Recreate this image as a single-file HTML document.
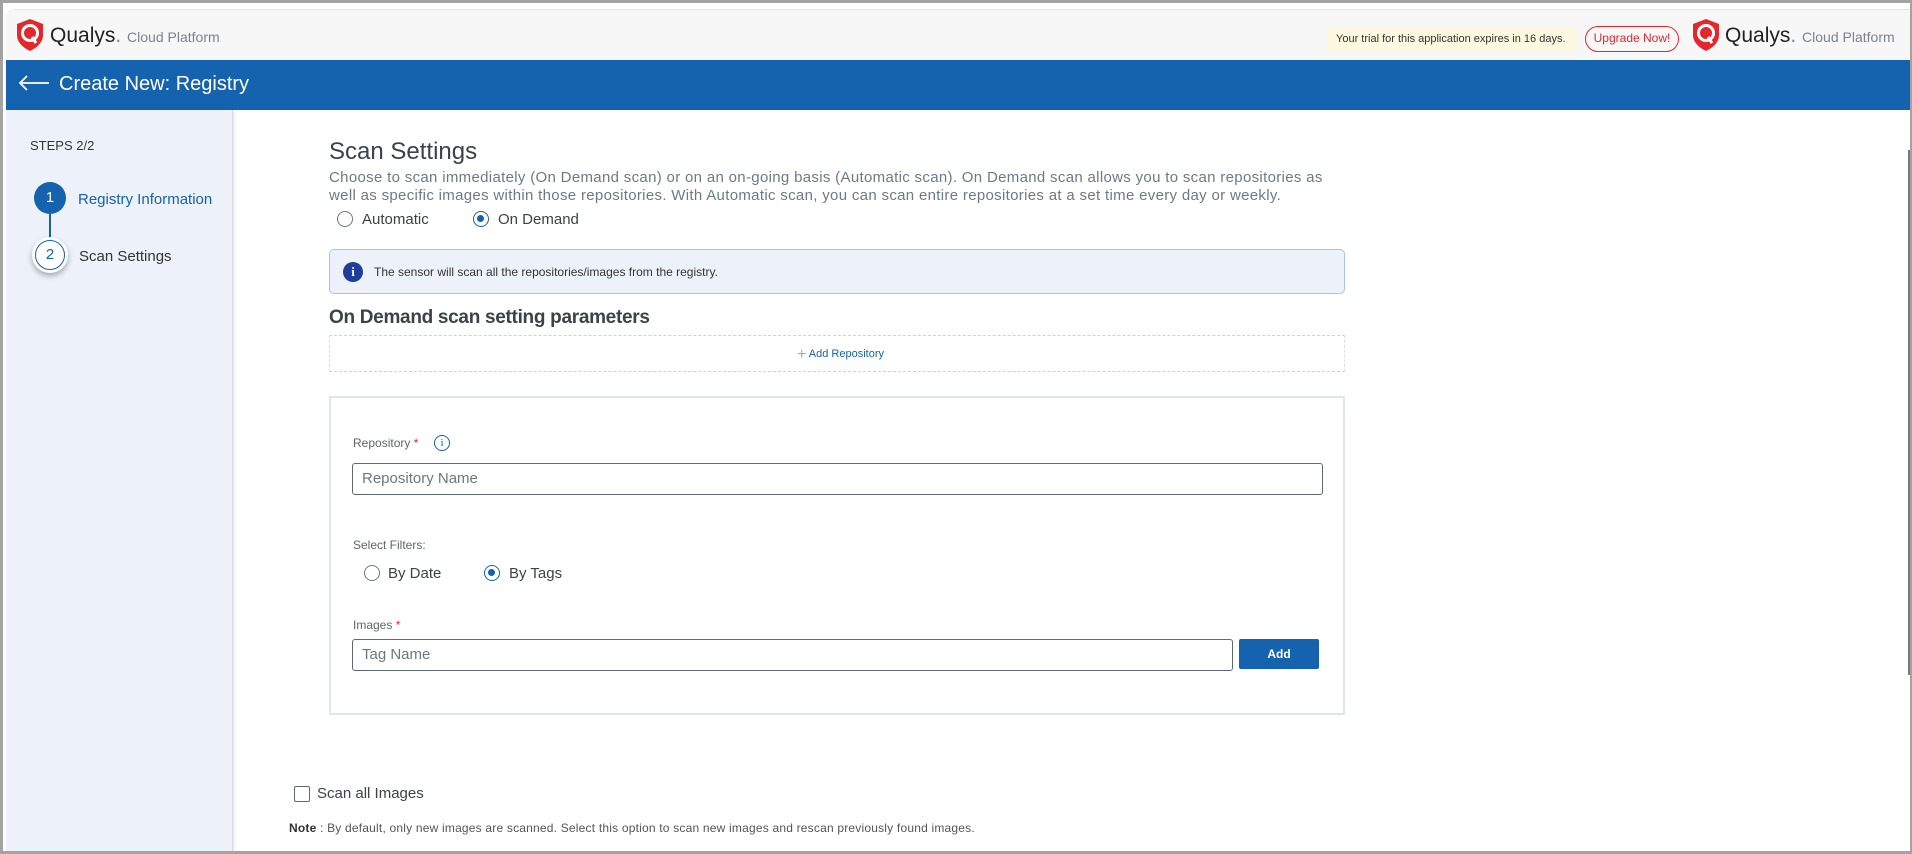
<!DOCTYPE html>
<html><head><meta charset="utf-8"><style>
*{box-sizing:border-box;margin:0;padding:0}
body{width:1912px;height:854px;overflow:hidden;background:#a3a3a3;font-family:"Liberation Sans",Arial,sans-serif;position:relative}
.frame{position:absolute;left:3px;top:3px;width:1907px;height:848px;background:#fff;overflow:hidden}
.top{position:absolute;left:3px;top:6px;right:0;height:51px;background:#f7f7f7;border-top-left-radius:10px;border-top:1px solid #e6e6e6}
.blue{position:absolute;left:3px;top:57px;width:1904px;height:50px;background:#1562ae}
.side{position:absolute;left:3px;top:107px;width:227px;height:745px;background:#edf2fa;border-right:1px solid #d5dbe3;box-shadow:2px 0 3px rgba(0,0,0,.08)}
.abs{position:absolute;white-space:nowrap}
.radio{position:absolute;width:16px;height:16px;border:1.5px solid #6b7680;border-radius:50%;background:#fff}
.radio.on::after{content:"";position:absolute;left:3px;top:3px;width:7px;height:7px;border-radius:50%;background:#1562ae}
.radio.on{border-color:#1562ae}
.lbl{font-size:12px;color:#5c6670}
.inp{position:absolute;border:1px solid #5a6a78;border-radius:3px;background:#fff;font-size:15px;color:#6c7780;padding-left:9px;line-height:30px}
</style></head><body>
<div class="frame">
<div class="top"></div>
<svg class="abs" style="left:12px;top:15px" width="30" height="34" viewBox="0 0 30 34"><path d="M15 1 L28 6 V17 C28 25 21 30 15 33 C9 30 2 25 2 17 V6 Z" fill="#e3272b"/><circle cx="15" cy="15" r="7.5" fill="none" stroke="#fff" stroke-width="3"/><path d="M17 19 L21 25" stroke="#fff" stroke-width="3"/></svg>
<div class="abs" style="left:47px;top:21px;font-size:21px;color:#222">Qualys<span style="color:#888">.</span> <span style="font-size:14px;color:#7a8290">Cloud Platform</span></div>
<div class="abs" style="left:1324px;top:25px;width:251px;height:23px;background:#fdf8e0;font-size:11px;color:#333;line-height:23px;padding-left:9px">Your trial for this application expires in 16 days.</div>
<div class="abs" style="left:1582px;top:23px;width:94px;height:26px;border:1.5px solid #e3272b;border-radius:13px;font-size:12px;color:#e3272b;line-height:23px;text-align:center">Upgrade Now!</div>
<svg class="abs" style="left:1688px;top:15px" width="30" height="34" viewBox="0 0 30 34"><path d="M15 1 L28 6 V17 C28 25 21 30 15 33 C9 30 2 25 2 17 V6 Z" fill="#e3272b"/><circle cx="15" cy="15" r="7.5" fill="none" stroke="#fff" stroke-width="3"/><path d="M17 19 L21 25" stroke="#fff" stroke-width="3"/></svg>
<div class="abs" style="left:1722px;top:21px;font-size:21px;color:#222">Qualys<span style="color:#888">.</span> <span style="font-size:14px;color:#7a8290">Cloud Platform</span></div>
<div class="blue"></div>
<svg class="abs" style="left:15px;top:72px" width="32" height="16" viewBox="0 0 32 16"><path d="M31 8 H2 M9 1 L2 8 L9 15" stroke="#fff" stroke-width="1.8" fill="none"/></svg>
<div class="abs" style="left:56px;top:70px;font-size:20px;color:#fff">Create New: Registry</div>
<div class="side"></div>
<div class="abs" style="left:27px;top:135px;font-size:13px;color:#333">STEPS 2/2</div>
<div class="abs" style="left:46px;top:211px;width:2px;height:30px;background:#1562ae"></div>
<div class="abs" style="left:31px;top:179px;width:32px;height:32px;border-radius:50%;background:#1562ae;color:#fff;font-size:15px;text-align:center;line-height:32px">1</div>
<div class="abs" style="left:75px;top:188px;font-size:15px;color:#1562ae">Registry Information</div>
<div class="abs" style="left:29px;top:234px;width:36px;height:36px;border-radius:50%;background:#fff;box-shadow:0 3px 6px rgba(0,0,0,.3)"><div style="margin:3px;width:30px;height:30px;border:1.5px solid #1562ae;border-radius:50%;color:#1562ae;font-size:15px;text-align:center;line-height:27px">2</div></div>
<div class="abs" style="left:76px;top:245px;font-size:15px;color:#333">Scan Settings</div>
<div class="abs" style="left:326px;top:135px;font-size:24px;color:#3a424a">Scan Settings</div>
<div class="abs" style="left:326px;top:166px;font-size:15px;letter-spacing:0.32px;color:#6b7a88;line-height:18px">Choose to scan immediately (On Demand scan) or on an on-going basis (Automatic scan). On Demand scan allows you to scan repositories as<br>well as specific images within those repositories. With Automatic scan, you can scan entire repositories at a set time every day or weekly.</div>
<div class="radio" style="left:334px;top:208px"></div>
<div class="abs" style="left:359px;top:208px;font-size:15px;color:#3a424a">Automatic</div>
<div class="radio on" style="left:470px;top:208px"></div>
<div class="abs" style="left:495px;top:208px;font-size:15px;color:#3a424a">On Demand</div>
<div class="abs" style="left:326px;top:246px;width:1016px;height:45px;border:1px solid #a7c4e3;border-radius:5px;background:#edf2fa"></div>
<div class="abs" style="left:340px;top:259px;width:20px;height:20px;border-radius:50%;background:#1c3f9a;color:#fff;font-size:13px;font-weight:bold;text-align:center;line-height:20px;font-family:'Liberation Serif',serif">i</div>
<div class="abs" style="left:371px;top:262px;font-size:12px;color:#333">The sensor will scan all the repositories/images from the registry.</div>
<div class="abs" style="left:326px;top:304px;font-size:19px;color:#3a424a;font-weight:bold;letter-spacing:-0.3px">On Demand scan setting parameters</div>
<div class="abs" style="left:326px;top:332px;width:1016px;height:37px;border:1.5px dashed #ccd2d8;border-left:1px dashed #ddd;border-right:1px dashed #ddd"></div>
<div class="abs" style="left:794px;top:343px;font-size:11px;color:#1562ae"><span style="font-size:16px;color:#8fb0d6;vertical-align:-2px">+</span> Add Repository</div>
<div class="abs" style="left:326px;top:393px;width:1016px;height:319px;border:2px solid #e1e5ea"></div>
<div class="abs lbl" style="left:350px;top:433px">Repository <span style="color:#e3272b">*</span></div>
<div class="abs" style="left:431px;top:432px;width:16px;height:16px;border:1px solid #1562ae;border-radius:50%;font-size:11px;color:#1562ae;text-align:center;line-height:14px;font-family:'Liberation Serif',serif">i</div>
<div class="inp" style="left:349px;top:460px;width:971px;height:32px">Repository Name</div>
<div class="abs lbl" style="left:350px;top:535px">Select Filters:</div>
<div class="radio" style="left:361px;top:562px"></div>
<div class="abs" style="left:385px;top:562px;font-size:15px;color:#3a424a">By Date</div>
<div class="radio on" style="left:481px;top:562px"></div>
<div class="abs" style="left:506px;top:562px;font-size:15px;color:#3a424a">By Tags</div>
<div class="abs lbl" style="left:350px;top:615px">Images <span style="color:#e3272b">*</span></div>
<div class="inp" style="left:349px;top:636px;width:881px;height:32px">Tag Name</div>
<div class="abs" style="left:1236px;top:636px;width:80px;height:30px;background:#1562ae;color:#fff;font-size:12px;font-weight:bold;text-align:center;line-height:30px;border-radius:2px">Add</div>
<div class="abs" style="left:291px;top:783px;width:16px;height:16px;border:1.5px solid #5a6a78;border-radius:2px"></div>
<div class="abs" style="left:314px;top:782px;font-size:15px;color:#3a424a">Scan all Images</div>
<div class="abs" style="left:286px;top:818px;font-size:12px;color:#555;letter-spacing:0.2px"><b style="color:#333">Note</b> : By default, only new images are scanned. Select this option to scan new images and rescan previously found images.</div>
<div class="abs" style="left:1905px;top:147px;width:2px;height:525px;background:#707a80"></div>
</div>
</body></html>
